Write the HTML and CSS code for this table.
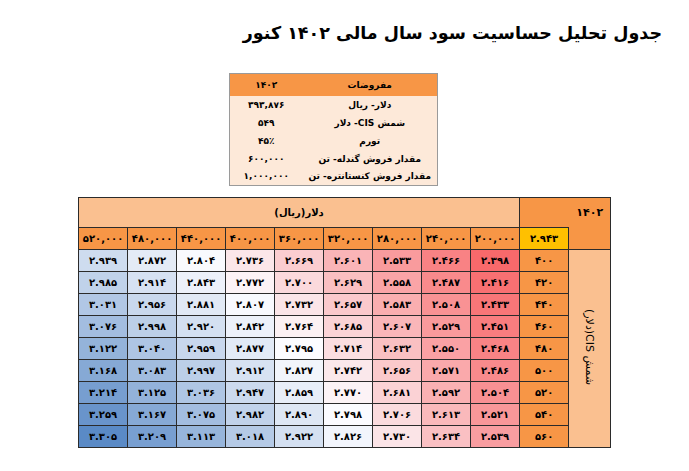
FILE: index.html
```html
<!DOCTYPE html>
<html lang="fa">
<head>
<meta charset="utf-8">
<title>جدول تحلیل حساسیت</title>
<link rel="stylesheet" href="styles.css">
</head>
<body>
<h1 class="title" dir="rtl">جدول تحلیل حساسیت سود سال مالی ۱۴۰۲ کنور</h1>

<table class="assume" dir="rtl">
  <thead>
    <tr><th class="a-label">مفروضات</th><th class="a-val">۱۴۰۲</th></tr>
  </thead>
  <tbody>
    <tr><td class="a-label">دلار- ریال</td><td class="a-val">۳۹۳,۸۷۶</td></tr>
    <tr><td class="a-label">شمش CIS- دلار</td><td class="a-val">۵۴۹</td></tr>
    <tr><td class="a-label">تورم</td><td class="a-val">۴۵٪</td></tr>
    <tr><td class="a-label">مقدار فروش گندله- تن</td><td class="a-val">۶۰۰,۰۰۰</td></tr>
    <tr><td class="a-label">مقدار فروش کنستانتره- تن</td><td class="a-val">۱,۰۰۰,۰۰۰</td></tr>
  </tbody>
</table>

<table class="sens" dir="rtl">
  <colgroup>
    <col class="c-side"><col class="c-row">
    <col class="c-d"><col class="c-d"><col class="c-d"><col class="c-d"><col class="c-d"><col class="c-d"><col class="c-d"><col class="c-d"><col class="c-d">
  </colgroup>
  <tr class="r-top">
    <td class="year" colspan="2">۱۴۰۲</td>
    <td class="dollar" colspan="9">دلار(ریال)</td>
  </tr>
  <tr class="r-head">
    <td class="year-tail"></td>
    <td class="base">۲.۹۴۳</td>
    <td class="ch">۲۰۰,۰۰۰</td><td class="ch">۲۴۰,۰۰۰</td><td class="ch">۲۸۰,۰۰۰</td><td class="ch">۳۲۰,۰۰۰</td><td class="ch">۳۶۰,۰۰۰</td><td class="ch">۴۰۰,۰۰۰</td><td class="ch">۴۴۰,۰۰۰</td><td class="ch">۴۸۰,۰۰۰</td><td class="ch">۵۲۰,۰۰۰</td>
  </tr>
  <tr>
    <td class="side" rowspan="9"><span class="side-text">شمش CIS(دلار)</span></td>
    <td class="rh">۴۰۰</td>
    <td class="v">۲.۳۹۸</td><td class="v">۲.۴۶۶</td><td class="v">۲.۵۳۳</td><td class="v">۲.۶۰۱</td><td class="v">۲.۶۶۹</td><td class="v">۲.۷۳۶</td><td class="v">۲.۸۰۴</td><td class="v">۲.۸۷۲</td><td class="v">۲.۹۳۹</td>
  </tr>
  <tr>
    <td class="rh">۴۲۰</td>
    <td class="v">۲.۴۱۶</td><td class="v">۲.۴۸۷</td><td class="v">۲.۵۵۸</td><td class="v">۲.۶۲۹</td><td class="v">۲.۷۰۰</td><td class="v">۲.۷۷۲</td><td class="v">۲.۸۴۳</td><td class="v">۲.۹۱۴</td><td class="v">۲.۹۸۵</td>
  </tr>
  <tr>
    <td class="rh">۴۴۰</td>
    <td class="v">۲.۴۳۳</td><td class="v">۲.۵۰۸</td><td class="v">۲.۵۸۳</td><td class="v">۲.۶۵۷</td><td class="v">۲.۷۳۲</td><td class="v">۲.۸۰۷</td><td class="v">۲.۸۸۱</td><td class="v">۲.۹۵۶</td><td class="v">۳.۰۳۱</td>
  </tr>
  <tr>
    <td class="rh">۴۶۰</td>
    <td class="v">۲.۴۵۱</td><td class="v">۲.۵۲۹</td><td class="v">۲.۶۰۷</td><td class="v">۲.۶۸۵</td><td class="v">۲.۷۶۴</td><td class="v">۲.۸۴۲</td><td class="v">۲.۹۲۰</td><td class="v">۲.۹۹۸</td><td class="v">۳.۰۷۶</td>
  </tr>
  <tr>
    <td class="rh">۴۸۰</td>
    <td class="v">۲.۴۶۸</td><td class="v">۲.۵۵۰</td><td class="v">۲.۶۳۲</td><td class="v">۲.۷۱۴</td><td class="v">۲.۷۹۵</td><td class="v">۲.۸۷۷</td><td class="v">۲.۹۵۹</td><td class="v">۳.۰۴۰</td><td class="v">۳.۱۲۲</td>
  </tr>
  <tr>
    <td class="rh">۵۰۰</td>
    <td class="v">۲.۴۸۶</td><td class="v">۲.۵۷۱</td><td class="v">۲.۶۵۶</td><td class="v">۲.۷۴۲</td><td class="v">۲.۸۲۷</td><td class="v">۲.۹۱۲</td><td class="v">۲.۹۹۷</td><td class="v">۳.۰۸۳</td><td class="v">۳.۱۶۸</td>
  </tr>
  <tr>
    <td class="rh">۵۲۰</td>
    <td class="v">۲.۵۰۴</td><td class="v">۲.۵۹۲</td><td class="v">۲.۶۸۱</td><td class="v">۲.۷۷۰</td><td class="v">۲.۸۵۹</td><td class="v">۲.۹۴۷</td><td class="v">۳.۰۳۶</td><td class="v">۳.۱۲۵</td><td class="v">۳.۲۱۴</td>
  </tr>
  <tr>
    <td class="rh">۵۴۰</td>
    <td class="v">۲.۵۲۱</td><td class="v">۲.۶۱۳</td><td class="v">۲.۷۰۶</td><td class="v">۲.۷۹۸</td><td class="v">۲.۸۹۰</td><td class="v">۲.۹۸۲</td><td class="v">۳.۰۷۵</td><td class="v">۳.۱۶۷</td><td class="v">۳.۲۵۹</td>
  </tr>
  <tr>
    <td class="rh">۵۶۰</td>
    <td class="v">۲.۵۳۹</td><td class="v">۲.۶۳۴</td><td class="v">۲.۷۳۰</td><td class="v">۲.۸۲۶</td><td class="v">۲.۹۲۲</td><td class="v">۳.۰۱۸</td><td class="v">۳.۱۱۳</td><td class="v">۳.۲۰۹</td><td class="v">۳.۳۰۵</td>
  </tr>
</table>

<script src="script.js"></script>
</body>
</html>
```

FILE: styles.css
```css
* { box-sizing: border-box; }

body {
  margin: 0;
  background: #ffffff;
  color: #000000;
  font-family: "DejaVu Sans", sans-serif;
}

.title {
  margin: 0;
  padding: 20px 27px 0 0;
  text-align: right;
  font-size: 17.5px;
  line-height: 26px;
  font-weight: bold;
}

/* assumptions table */
.assume {
  margin: 27px 0 0 229px;
  width: 208px;
  border-collapse: collapse;
  border: 1px solid #9a9a9a;
  table-layout: fixed;
  font-size: 9px;
  font-weight: bold;
  white-space: nowrap;
}
.assume th {
  background: #f79646;
  height: 22px;
  font-weight: bold;
  padding: 0;
}
.assume td {
  background: #fde9d9;
  height: 18px;
  padding: 0;
}
.assume .a-label { width: 135px; text-align: center; }
.assume .a-val { width: 73px; text-align: center; }

/* sensitivity table */
.sens {
  margin: 11px 0 0 78px;
  width: 533px;
  border-collapse: collapse;
  table-layout: fixed;
  font-size: 10px;
  font-weight: bold;
  border: 1px solid #3a3a3a;
  white-space: nowrap;
}
.sens td {
  border: 1px solid #2b2b2b;
  padding: 0;
  text-align: center;
  height: 22px;
}
.c-side { width: 42px; }
.c-row { width: 49px; }
.c-d { width: 49px; }

.sens .r-top td { height: 30px; }
.sens .year {
  background: #f79646;
  text-align: right;
  vertical-align: middle;
  padding-right: 7px;
  font-size: 11px;
  border-bottom: none;
}
.sens .year-tail {
  background: #f79646;
  border-top: none;
}
.sens .dollar {
  background: #fac090;
  font-size: 10px;
}
.sens .base { background: #ffc000; }
.sens .ch { background: #f79646; }
.sens .rh { background: #f79646; }
.sens .side {
  background: #fac090;
  vertical-align: middle;
}
.side-text {
  display: inline-block;
  writing-mode: vertical-rl;
  font-weight: normal;
  font-size: 11px;
}
.sens .v { background: #fcfcff; }
```

FILE: script.js
```js
(function () {
  var cells = document.querySelectorAll('.sens td.v');
  function num(s) {
    var t = s.replace(/[\u06F0-\u06F9]/g, function (d) {
      return String(d.charCodeAt(0) - 0x06F0);
    }).replace(/[^0-9.]/g, '');
    return parseFloat(t);
  }
  var vals = Array.prototype.map.call(cells, function (c) { return num(c.textContent); });
  var sorted = vals.slice().sort(function (a, b) { return a - b; });
  var min = sorted[0], max = sorted[sorted.length - 1];
  var r = (sorted.length - 1) * 0.5, lo = Math.floor(r);
  var mid = sorted[lo] + (sorted[Math.ceil(r)] - sorted[lo]) * (r - lo);
  var cMin = [248, 105, 107], cMid = [252, 252, 255], cMax = [90, 138, 198];
  function mix(a, b, t) {
    return 'rgb(' + a.map(function (x, i) { return Math.round(x + (b[i] - x) * t); }).join(',') + ')';
  }
  Array.prototype.forEach.call(cells, function (c, i) {
    var v = vals[i], col;
    if (v <= mid) col = mix(cMin, cMid, (v - min) / (mid - min));
    else col = mix(cMid, cMax, (v - mid) / (max - mid));
    c.style.background = col;
  });
})();
```
